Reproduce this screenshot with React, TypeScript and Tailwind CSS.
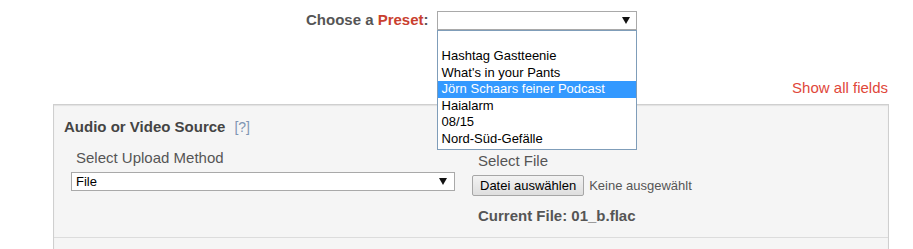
import React from "react";

const font = { fontFamily: '"Liberation Sans", Arial, sans-serif' };

function Arrow() {
  return (
    <svg width="8" height="7" viewBox="0 0 8 7" className="block">
      <path d="M0 0 H8 L4 7 Z" fill="#111" />
    </svg>
  );
}

export default function App() {
  const items = [
    "",
    "Hashtag Gastteenie",
    "What's in your Pants",
    "Jörn Schaars feiner Podcast",
    "Haialarm",
    "08/15",
    "Nord-Süd-Gefälle",
  ];
  return (
    <div className="relative w-[913px] h-[249px] overflow-hidden bg-white" style={font}>
      {/* preset row */}
      <div className="flex items-center pt-[11px] pl-[306px] h-[29px]">
        <span className="text-[15px] font-bold text-[#555] mr-[8px] leading-[18px]">
          Choose a <span className="text-[#c9402f]">Preset</span>:
        </span>
        <div className="relative w-[200px] h-[19px] border border-[#a9a9a9] bg-white flex items-center justify-end pr-[6px]">
          <Arrow />
          <div className="absolute left-[-1px] top-[18px] w-[200px] h-[120px] border border-[#7f9db9] bg-white pt-[1px] z-10">
            {items.map((it, i) => (
              <div
                key={i}
                className={`h-[16.5px] leading-[16px] text-[13px] pl-[4px] whitespace-nowrap ${
                  i === 3 ? "bg-[#3399ff] text-white" : "text-black"
                }`}
              >
                {it}
              </div>
            ))}
          </div>
        </div>
      </div>

      {/* show all fields */}
      <div className="flex justify-end pr-[25px] mt-[50px]">
        <span className="text-[15px] leading-[18px] text-[#e0473a]">Show all fields</span>
      </div>

      {/* panel */}
      <div className="ml-[53px] mr-[24px] mt-[7px] border border-[#cfcfcf] border-b-0 bg-[#f5f5f5] shadow-[inset_0_1px_1px_rgba(0,0,0,0.08)]">
        <div className="pt-[13px] pl-[10px] flex items-baseline">
          <span className="text-[15px] font-bold text-[#444] leading-[18px]">Audio or Video Source</span>
          <span className="ml-[9px] text-[14px] text-[#7f95b3] leading-[18px]">[?]</span>
        </div>
        <div className="flex mt-[13px] h-[88px]">
          <div className="w-[401px] pl-[17px] shrink-0">
            <div className="pl-[5px] text-[15px] leading-[17px] text-[#555]">Select Upload Method</div>
            <div className="mt-[6px] w-[384px] h-[19px] border border-[#a9a9a9] bg-white flex items-center justify-between pl-[4px] pr-[7px]">
              <span className="text-[13px] text-black leading-[15px]">File</span>
              <Arrow />
            </div>
          </div>
          <div className="pl-[17px] pt-[3px]">
            <div className="pl-[6px] text-[15px] leading-[17px] text-[#555]">Select File</div>
            <div className="flex items-center mt-[6px]">
              <div className="h-[21px] px-[7px] border border-[#a6a6a6] rounded-[2px] bg-gradient-to-b from-[#f3f3f3] to-[#dedede] text-[13px] leading-[19px] text-black whitespace-nowrap">
                Datei auswählen
              </div>
              <span className="ml-[5px] text-[13px] text-[#555] whitespace-nowrap">Keine ausgewählt</span>
            </div>
            <div className="pl-[6px] mt-[11px] text-[15px] font-bold text-[#555] leading-[17px]">
              Current File: 01_b.flac
            </div>
          </div>
        </div>
        <div className="border-t border-[#dcdcdc] h-[20px]" />
      </div>
    </div>
  );
}
